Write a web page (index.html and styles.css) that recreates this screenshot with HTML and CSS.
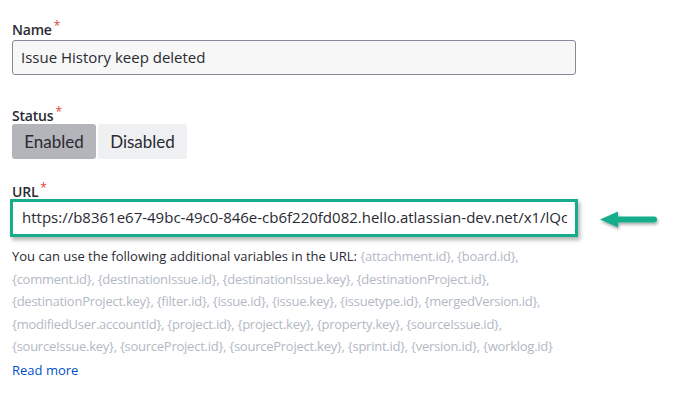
FILE: index.html
```html
<!DOCTYPE html>
<html>
<head>
<meta charset="utf-8">
<link rel="stylesheet" href="styles.css">
</head>
<body>
<div class="form">
  <div class="field name-field">
    <label class="label">Name<span class="req">*</span></label>
    <div class="input name-input">Issue History keep deleted</div>
  </div>
  <div class="field status-field">
    <label class="label">Status<span class="req">*</span></label>
    <div class="toggle">
      <button class="btn active">Enabled</button>
      <button class="btn">Disabled</button>
    </div>
  </div>
  <div class="field url-field">
    <label class="label">URL<span class="req">*</span></label>
    <div class="url-row">
      <div class="highlight">
        <div class="input url-input"><span class="url-clip">https://b8361e67-49bc-49c0-846e-cb6f220fd082.hello.atlassian-dev.net/x1/lQc</span></div>
      </div>
      <svg class="arrow" width="62" height="22" viewBox="0 0 62 22">
        <defs>
          <filter id="sh" x="-20%" y="-50%" width="140%" height="220%">
            <feDropShadow dx="1" dy="2" stdDeviation="1.5" flood-color="#000" flood-opacity="0.35"/>
          </filter>
        </defs>
        <g filter="url(#sh)">
          <path d="M18 7.5 H55 a3 3 0 0 1 0 6 H18 Z" fill="#17ad8c"/>
          <path d="M1 10.5 L19 2.5 L19 18.5 Z" fill="#17ad8c"/>
        </g>
      </svg>
    </div>
    <p class="help">You can use the following additional variables in the URL: <span class="vars">{attachment.id}, {board.id}, {comment.id}, {destinationIssue.id}, {destinationIssue.key}, {destinationProject.id}, {destinationProject.key}, {filter.id}, {issue.id}, {issue.key}, {issuetype.id}, {mergedVersion.id}, {modifiedUser.accountId}, {project.id}, {project.key}, {property.key}, {sourceIssue.id}, {sourceIssue.key}, {sourceProject.id}, {sourceProject.key}, {sprint.id}, {version.id}, {worklog.id}</span></p>
    <a class="more" href="#">Read more</a>
  </div>
</div>
</body>
</html>
```
FILE: styles.css
```css
* { box-sizing: border-box; }
html, body { margin: 0; background: #fff; }
body {
  font-family: "Open Sans", "Noto Sans", sans-serif;
  color: #172b4d;
  padding: 21px 0 0 12px;
}
.form { width: 670px; display: flex; flex-direction: column; }
.label {
  display: block;
  font-size: 14px;
  font-weight: 600;
  color: #2a2a33;
  line-height: 18px;
  letter-spacing: -0.2px;
}
.req { color: #e0453a; font-size: 12px; position: relative; top: -5px; margin-left: 2px; font-weight: 400; }
.input {
  height: 35px;
  border: 1.5px solid #8a8898;
  border-radius: 3px;
  background: #f7f7f7;
  font-size: 15px;
  line-height: 32px;
  padding: 0 8px;
  color: #2a2a33;
  white-space: nowrap;
  overflow: hidden;
}
.name-input { width: 564px; }
.name-field .label { margin-bottom: 0; }
.status-field { margin-top: 32px; }
.toggle { display: flex; gap: 2px; margin-top: -2px; }
.btn {
  font-family: "Lato", "Noto Sans", sans-serif;
  font-size: 17px;
  height: 35px;
  border: none;
  border-radius: 3px;
  padding: 0;
  background: #eff0f2;
  color: #2a2a33;
}
.btn.active { background: #b4b5bb; width: 84px; }
.btn:not(.active) { width: 89px; }
.url-field { margin-top: 24px; }
.url-row { display: flex; align-items: center; gap: 21px; margin-left: -2px; margin-top: -3px; }
.highlight {
  flex: none;
  width: 568px;
  height: 38px;
  border: 3.5px solid #17ad8c;
  background: #fff;
  box-shadow: 2px 3px 4px rgba(0,0,0,0.3);
  overflow: hidden;
}
.url-input {
  border-color: #fff #9a98a6 #fff #fff;
  background: #fff;
  height: 31px;
  line-height: 29px;
  width: 563px;
  padding-left: 8px;
}
.url-clip { display: inline-block; max-width: 545px; overflow: hidden; vertical-align: top; }
.arrow { flex: none; margin-top: 4px; }
.help {
  margin: 8px 0 0 0;
  font-size: 13px;
  line-height: 22.6px;
  color: #2a2a33;
  width: 564px;
}
.vars { color: #b3b9c4; letter-spacing: -0.25px; }
.more { font-size: 13px; color: #0052cc; text-decoration: none; line-height: 20px; }
```
